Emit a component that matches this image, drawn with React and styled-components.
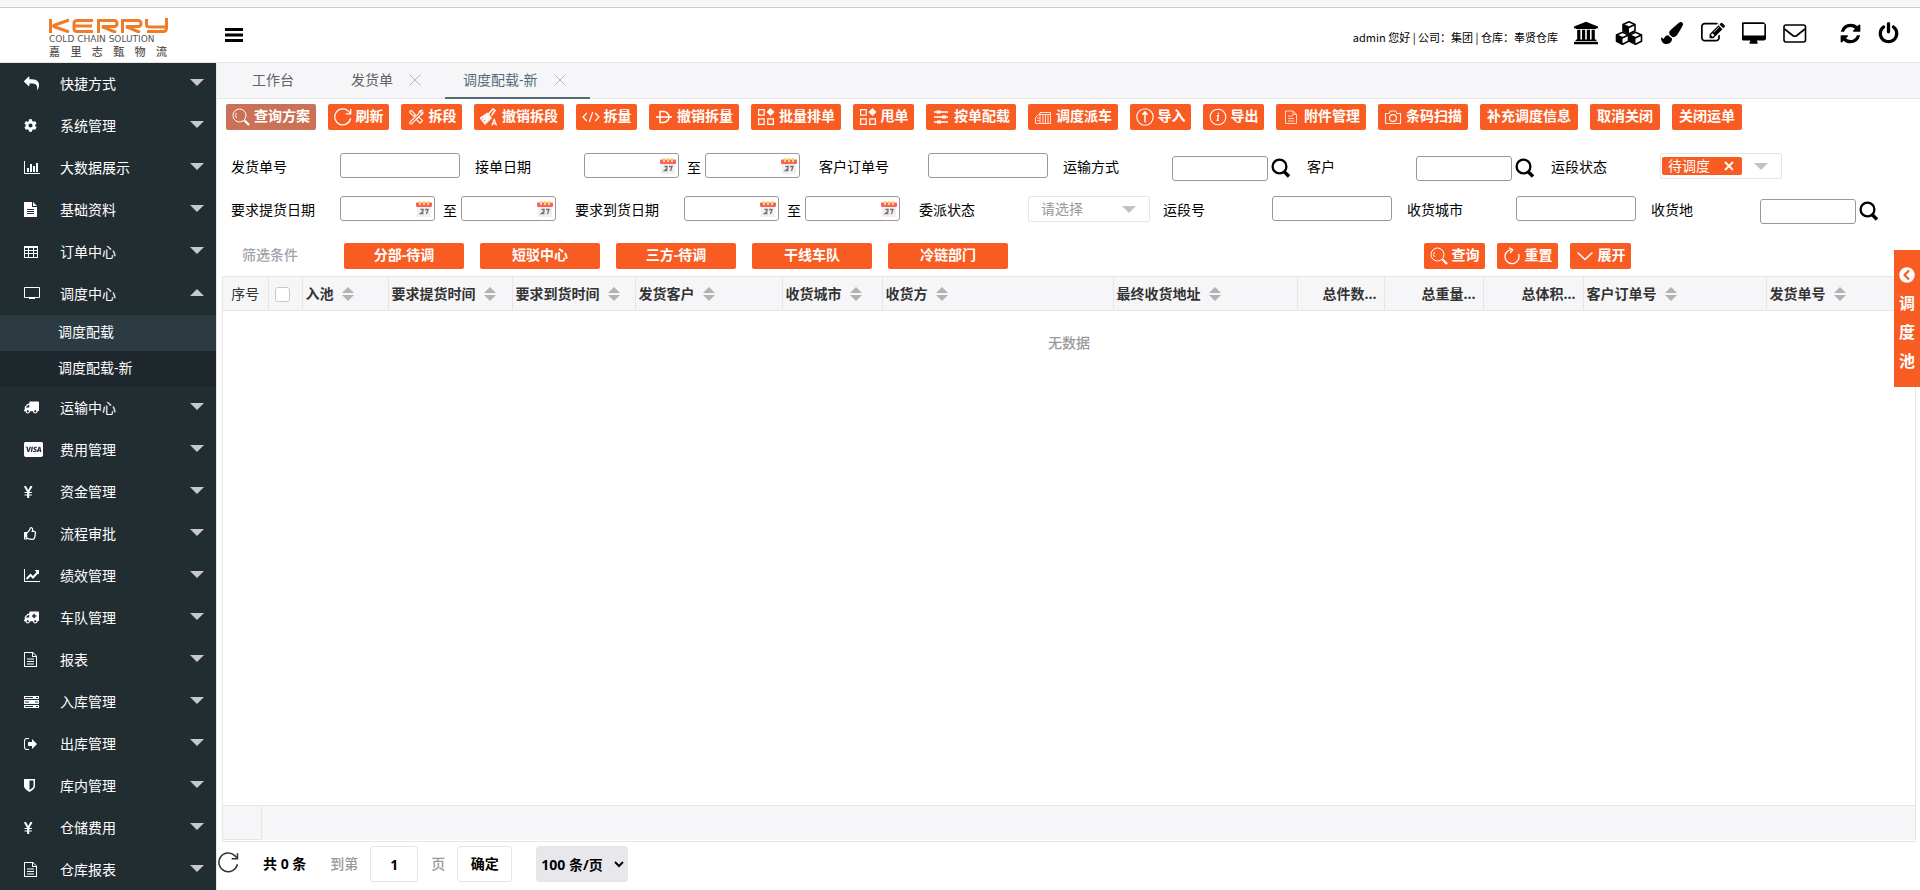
import React from "react";
import styled, { createGlobalStyle, css } from "styled-components";
import {
  FaCog, FaPaintBrush, FaTruck, FaAmbulance, FaCcVisa,
  FaRegThumbsUp, FaChevronCircleLeft,
} from "react-icons/fa";

const ORANGE = "#f85c22";
const LINE = "#e6e6e6";
const PANEL = "#f6f6f8";

const Global = createGlobalStyle`
  * { box-sizing: border-box; }
  html, body, #root { height: 100%; }
  body {
    margin: 0;
    background: #fff;
    color: #000;
    overflow: hidden;
    font: 14px/20px "Open Sans", "Noto Sans CJK SC", sans-serif;
  }
  button, input, select { font: inherit; color: inherit; }
  button { cursor: pointer; }
  svg { display: block; flex: none; }
`;

/* ---------- icons ---------- */

const Line = ({ size = 18, box = 18, w = 1, children }) => (
  <svg width={size} height={size} viewBox={`0 0 ${box} ${box}`} fill="none" stroke="currentColor" strokeWidth={w} aria-hidden="true">
    {children}
  </svg>
);
const Solid = ({ width = 16, height = 16, box = "0 0 1792 1792", flip, children }) => (
  <svg width={width} height={height} viewBox={box} fill="currentColor" aria-hidden="true">
    <g transform={flip ? "translate(1792 0) scale(-1 1)" : undefined}>{children}</g>
  </svg>
);

const SearchLine = () => (
  <Line><circle cx="7.5" cy="7.5" r="6.5" /><path d="M4.5 10a4 4 0 0 1 0-5" /><path d="M12.5 12.5l4.500 4.500" strokeWidth="2.400" /></Line>
);
const RefreshLine = ({ size = 18 }) => (
  <Line size={size} w={1.3}><path d="M16.6 10.500A8 8 0 1 1 14.300 3.100L16.500 5.200" /><path d="M16.700 1v4.800h-5" /></Line>
);
const ResetLine = () => (
  <Line w={1.3}><path d="M9 2.600A7 7 0 1 0 15.500 7" /><path d="M6 .8l3.700 2-2.500 3.400" /></Line>
);
const ToolsLine = () => (
  <Line w={1.100}><path d="M3 14.200l9-9M4.600 15.800l9-9M3 14.200q-.6 2 1.600 1.600" /><path d="M12 5.200q-.2-3 3-3l-1.500 2 .8.900 1.700-1q0 3-2.800 2.600" /><path d="M2.800 3.200l1.700-.7L8.500 7 7 8.300 3 4.700zM10 10.500l2-1.500 3.500 3.800-2.400 2.400-3.400-3.400z" /></Line>
);
const BrushA = () => (
  <Line><path d="M0 10l7.500-5 4 5-6.500 6.500z" fill="currentColor" /><path d="M8.500 6l4.500-5 2 1.500-3.500 5" strokeWidth="1.500" /><path d="M1.800 11.300l1.700-1M3.500 13.300l2-1.500" stroke={ORANGE} strokeWidth=".8" /><path d="M12 17.500l2.200-6 2.300 6M12.700 15.600h3" strokeWidth="1.200" /></Line>
);
const CodeLine = () => (
  <Line w={1.200}><path d="M4.800 5L1 9l3.800 4M13.200 5L17 9l-3.800 4M10.700 4L7.300 14" /></Line>
);
const StrikeD = () => (
  <Line w={1.5}><path d="M5 3.500h3.500a5.500 5.500 0 0 1 0 11H5zM1 9h16" /></Line>
);
const Blocks = () => (
  <Line w={1.2}><path d="M1.600 1.600h5.600v5.600H1.600zM1.600 10.800h5.600v5.600H1.600zM10.800 10.800h5.600v5.600h-5.600z" /><path d="M13.500 0l4 4-4 4-4-4z" fill="currentColor" stroke="none" /></Line>
);
const Sliders = () => (
  <Line w={1.400}><path d="M2 4h14M2 9h14M2 14h14" /><path d="M6.500 2.500v3M12 7.500v3M7 12.500v3" strokeWidth="4" /></Line>
);
const Dispatch = () => (
  <Line w={1}><path d="M1.500 15.500v-6l3-3h12v9zM6 15V4.500h10.500V7M9 7v8M11.500 7v8M14 7v8M3 10h2.500M3 12.500h2.500" opacity=".8" /></Line>
);
const ImportLine = () => (
  <Line w={1.100}><circle cx="9" cy="9" r="8.200" /><path d="M9 14.500V4M6.500 6.800L9 4l2.500 2.800" strokeWidth="1.500" /></Line>
);
const InfoLine = () => (
  <Line w={1.100}><circle cx="9" cy="9" r="7.800" /><path d="M7.800 7.800h1.600l-1 4.400h1.500M9.400 4.800v1.400" strokeWidth="1.400" /></Line>
);
const DocLine = () => (
  <Line w={1}><path d="M3.500 3h7.500l3.500 3.500V15.500h-11zM11 3v3.500h3.500M6 8h5M6 10.500h6M6 13h6" opacity=".75" /></Line>
);
const CameraLine = () => (
  <Line w={1.100}><path d="M1.500 5.500H5L6.500 3h5L13 5.500h3.500v10h-15z" opacity=".85" /><circle cx="9" cy="10" r="3.400" /></Line>
);
const DownLine = () => <Line w={1.500}><path d="M1.500 5.500L9 12.500l7.500-7" /></Line>;
const CloseLine = () => <Line size={12} box={12} w={1}><path d="M.5.5l11 11M11.500.5l-11 11" /></Line>;
const Lens = () => (
  <Line size={20} box={20}><circle cx="8.500" cy="8.500" r="6.900" strokeWidth="2.300" /><path d="M13 13.500l5 5" strokeWidth="3.400" /></Line>
);
const Calendar = () => (
  <svg width="18" height="18" viewBox="0 0 18 18" aria-hidden="true">
    <path d="M2 5h14v12H2z" fill="#f1efef" />
    <path d="M1 3.500q0-1 1-1h14q1 0 1 1V6q0 1-1 1H2Q1 7 1 6z" fill="#f9625f" />
    <path d="M4 1h2v4H4zM8 1h2v4H8zM12 1h2v4h-2z" fill="#f9d96a" />
    <path d="M5.500 9.500h2.500v2L5.500 13.500h3M10 9.500h3l-1.500 4.500" fill="none" stroke="#776b6e" strokeWidth="1.300" />
  </svg>
);

const Bars = () => <Solid width={18} height={16} box="0 0 18 16"><path d="M0 1h18v3H0zM0 6.500h18v3H0zM0 12h18v3H0z" /></Solid>;
const Bank = () => (
  <Solid width={24} height={24} box="0 0 1920 1792">
    <path d="M960 0l960 384v128h-128q0 26-20 45t-49 19H197q-28 0-48-19t-21-45H0V384zM256 640h256v768h128V640h256v768h128V640h256v768h128V640h256v768h59q28 0 49 19t20 45v64H128v-64q0-26 21-45t48-19h59zM1851 1600q28 0 49 19t20 45v128H0v-128q0-26 21-45t48-19z" />
  </Solid>
);
const Cube = ({ x, y }) => (
  <g transform={`translate(${x} ${y})`}>
    <path d="M7 .8l6 2.600v6.400L7 12.800 1 9.800V3.400z" fill="#fff" stroke="currentColor" strokeWidth="1.600" strokeLinejoin="round" />
    <path d="M1 3.600l6 2.700v6.500L1 9.800z" fill="currentColor" />
    <path d="M1 3.500l6 2.800 6-2.800" fill="none" stroke="currentColor" strokeWidth="1.500" />
  </g>
);
const Cubes = () => (
  <svg width="28" height="24" viewBox="0 0 28 24" aria-hidden="true">
    <Cube x={7} y={0} /><Cube x={0.500} y={10.500} /><Cube x={13.500} y={10.500} />
  </svg>
);
const Power = () => (
  <Solid width={23} height={23}>
    <path d="M1664 896q0 156-61 298t-164 245-245 164-298 61-298-61-245-164-164-245-61-298q0-182 80.500-343t226.500-270q43-32 95.500-25t83.500 50q32 42 24.500 94.500t-49.500 84.500q-98 74-151.500 181t-53.500 228q0 104 40.500 198.500t109.500 163.500 163.500 109.500 198.500 40.500 198.500-40.500 163.500-109.500 109.500-163.500 40.500-198.500q0-121-53.500-228t-151.500-181q-42-32-49.500-84.500t24.500-94.500q31-43 84-50t95 25q146 109 226.500 270t80.500 343zm-640-768v640q0 52-38 90t-90 38-90-38-38-90v-640q0-52 38-90t90-38 90 38 38 90z" />
  </Solid>
);
const Refresh = () => (
  <Solid width={23} height={23}>
    <path d="M1639 1056q0 5-1 7-64 268-268 434.500t-478 166.500q-146 0-282.500-55t-243.500-157l-129 129q-19 19-45 19t-45-19-19-45v-448q0-26 19-45t45-19h448q26 0 45 19t19 45-19 45l-137 137q71 66 161 102t187 36q134 0 250-65t186-179q11-17 53-117 8-23 30-23h192q13 0 22.500 9.500t9.500 22.500zm25-800v448q0 26-19 45t-45 19h-448q-26 0-45-19t-19-45 19-45l138-138q-148-137-349-137-134 0-250 65t-186 179q-11 17-53 117-8 23-30 23h-199q-13 0-22.500-9.500t-9.500-22.500v-7q65-268 270-434.500t480-166.500q146 0 284 55.500t245 156.500l130-129q19-19 45-19t45 19 19 45z" />
  </Solid>
);
const Desktop = () => (
  <Solid width={24} height={22} box="0 0 1856 1664">
    <path d="M1728 992v-832q0-13-9.500-22.500t-22.500-9.500h-1536q-13 0-22.500 9.500t-9.500 22.500v832q0 13 9.500 22.500t22.500 9.500h1536q13 0 22.500-9.500t9.500-22.500zm128-832v1088q0 66-47 113t-113 47h-544q0 37 16 77.500t32 71 16 43.500q0 26-19 45t-45 19h-512q-26 0-45-19t-19-45q0-14 16-44t32-70 16-78h-544q-66 0-113-47t-47-113v-1088q0-66 47-113t113-47h1536q66 0 113 47t47 113z" />
  </Solid>
);
const Edit = () => (
  <Solid width={24} height={24}>
    <path d="M888 1184l116-116-152-152-116 116v56h96v96h56zm440-720q-16-16-33 1l-350 350q-17 17-1 33t33-1l350-350q17-17 1-33zm80 594v190q0 119-84.500 203.500t-203.500 84.500h-832q-119 0-203.500-84.500t-84.500-203.500v-832q0-119 84.500-203.500t203.500-84.500h832q63 0 117 25 15 7 18 23 3 17-9 29l-49 49q-14 14-32 8-23-6-45-6h-832q-66 0-113 47t-47 113v832q0 66 47 113t113 47h832q66 0 113-47t47-113v-126q0-13 9-22l64-64q15-15 35-7t20 29zm-96-738l288 288-672 672h-288v-288zm444 132l-92 92-288-288 92-92q28-28 68-28t68 28l152 152q28 28 28 68t-28 68z" />
  </Solid>
);
const Mail = () => (
  <Line size={24} box={24} w={1.600}>
    <rect x="1" y="4" width="21.500" height="17" rx="2" /><path d="M1.500 8l8.300 6.500q2 1.500 4 0L22 8" />
  </Line>
);
const Reply = () => (
  <Solid width={15} height={15} flip>
    <path d="M1792 640q0 26-19 45l-512 512q-19 19-45 19t-45-19-19-45v-256h-224q-98 0-175.500 6t-154 21.500-133 42.500-105.500 69.500-80 101-48.500 138.500-17.500 181q0 55 5 123 0 6 2.500 23.500t2.500 26.500q0 15-8.500 25t-23.500 10q-16 0-28-17-7-9-13-22t-13.500-30-10.500-24q-127-285-127-451 0-199 53-333 162-403 875-403h224v-256q0-26 19-45t45-19 45 19l512 512q19 19 19 45z" />
  </Solid>
);
const Screen = () => <Solid width={16} height={13} box="0 0 16 13"><path fillRule="evenodd" d="M1 0h14q1 0 1 1v9q0 1-1 1h-4v1H5v-1H1q-1 0-1-1V1Q0 0 1 0zM1 1v9h14V1z" /></Solid>;
const Yen = () => (
  <Line size={12} box={12} w={1.200}>
    <path d="M.8 0l3.400 6v6M7.600 0L4.200 6" strokeWidth="2" /><path d="M.5 6.500h7.400M.5 9h7.400" />
  </Line>
);
const BarChart = () => <Solid width={16} height={13} box="0 0 16 13"><path d="M0 0h1v12h15v1H0zM3 7h2v4H3zM6 3h2v8H6zM9 5h2v6H9zM12 2h2v9h-2z" /></Solid>;
const LineChart = () => (
  <svg width="16" height="13" viewBox="0 0 16 13" aria-hidden="true">
    <path d="M0 0h1v12h15v1H0zM10.500 1H15v4.500l-1.500-1.500z" fill="currentColor" />
    <path d="M2.500 10l4-4 2.500 2.500 5-5.500" fill="none" stroke="currentColor" strokeWidth="2" />
  </svg>
);
const FileSolid = () => <Solid width={13} height={15} box="0 0 13 15"><path fillRule="evenodd" d="M0 0h8v5h5v10H0zM9 0l4 4H9zM3 7v1h7V7zM3 9v1h7V9zM3 11v1h7v-1z" /></Solid>;
const FileOpen = () => <Solid width={13} height={15} box="0 0 13 15"><path fillRule="evenodd" d="M0 0h9l4 4v11H0zM1 1v13h11V5H8V1zM9 1v3h3zM3 6.500v1h7v-1zM3 9v1h7V9zM3 11.500v1h7v-1z" /></Solid>;
const Grid = () => <Solid width={14} height={12} box="0 0 14 12"><path fillRule="evenodd" d="M0 0h14v12H0zM1 2v2h3V2zM5 2v2h4V2zM10 2v2h3V2zM1 5v2h3V5zM5 5v2h4V5zM10 5v2h3V5zM1 8v3h3V8zM5 8v3h4V8zM10 8v3h3V8z" /></Solid>;
const Server = () => <Solid width={15} height={12} box="0 0 15 12"><path fillRule="evenodd" d="M0 0h15v3H0zM0 4h15v4H0zM0 9h15v3H0zM1 1v1h8V1zM12 1v1h2V1zM1 5.500v1h4v-1zM11 5.500v1h3v-1zM1 10v1h8v-1zM12 10v1h2v-1z" /></Solid>;
const SignOut = () => <Solid width={13} height={12} box="0 0 13 12"><path d="M5 0v1H3Q1 1 1 3v6q0 2 2 2h2v1H3Q0 12 0 9V3Q0 0 3 0zM4 4h4V1l5 5-5 5V8H4z" /></Solid>;
const Shield = () => <Solid width={11} height={13} box="0 0 11 13"><path fillRule="evenodd" d="M0 0h11v7q0 3-5.500 6Q0 10 0 7zM5.500 1.500v9.500Q9.500 8.500 9.500 7V1.500z" /></Solid>;

/* ---------- frame ---------- */

const Page = styled.div`
  display: flex;
  flex-direction: column;
  height: 100%;
`;
const TopStrip = styled.div`
  flex: none;
  height: 8px;
  background: ${PANEL};
  border-bottom: 1px solid #ccc;
`;
const Header = styled.header`
  flex: none;
  display: flex;
  align-items: center;
  height: 55px;
  border-bottom: 1px solid ${LINE};
`;
const Brand = styled.div`
  flex: none;
  align-self: flex-start;
  width: 217px;
  padding: 10px 50px 0 49px;
  color: #555;
  white-space: nowrap;
`;
const BrandEnglish = styled.div`
  font: 9px/13px "DejaVu Sans", sans-serif;
`;
const BrandChinese = styled.div`
  font: 500 11px/10px "Noto Sans CJK SC", sans-serif;
  text-align-last: justify;
`;
const MenuButton = styled.button`
  margin-left: 8px;
  padding: 0;
  border: 0;
  background: none;
`;
const Account = styled.p`
  margin: 4px 16px 0 auto;
  font: 11px/20px "Noto Sans CJK SC", sans-serif;
`;
const HeaderTools = styled.nav`
  display: flex;
  align-items: center;
  padding: 0 20px 4px 0;
  gap: 17px;
`;
const ToolButton = styled.button`
  display: grid;
  place-items: center;
  min-width: 24px;
  height: 28px;
  padding: 0;
  border: 0;
  background: none;
  margin-left: ${(p) => (p.$apart ? "14px" : 0)};
  margin-right: ${(p) => (p.$apart ? "-3px" : 0)};
`;
const Body = styled.div`
  flex: 1;
  min-height: 0;
  display: flex;
`;

/* ---------- side menu ---------- */

const Sidebar = styled.nav`
  flex: none;
  width: 216px;
  overflow: hidden;
  background: #222d32;
  color: #fff;
`;
const MenuItem = styled.button`
  display: flex;
  align-items: center;
  width: 100%;
  height: 42px;
  padding: 0 12px 1px 24px;
  border: 0;
  background: none;
  text-align: left;
`;
const MenuIcon = styled.span`
  flex: none;
  width: 36px;
`;
const Caret = styled.i`
  flex: none;
  margin: 0 0 3px auto;
  border: 7px solid transparent;
  border-bottom-width: 0;
  border-top-color: ${(p) => p.$color || "#c8c8c8"};
  transform: ${(p) => (p.$up ? "rotate(180deg)" : "none")};
`;
const SubItem = styled.a`
  display: block;
  padding: 7px 0 9px 58px;
  background: ${(p) => (p.$on ? "#2c3b41" : "#1e282c")};
  color: #fff;
  text-decoration: none;
`;

/* ---------- tabs and toolbar ---------- */

const Main = styled.main`
  flex: 1;
  min-width: 0;
  display: flex;
  flex-direction: column;
  border-left: 1px solid ${LINE};
`;
const Tabs = styled.div`
  flex: none;
  display: flex;
  height: 36px;
  padding-left: 17px;
  background: ${PANEL};
  border-bottom: 1px solid ${LINE};
`;
const Tab = styled.div`
  display: flex;
  align-items: center;
  height: 36px;
  padding: 0 ${(p) => (p.$plain ? "39px" : "24px")} 0 18px;
  gap: 16px;
  color: ${(p) => (p.$on ? "#56697a" : "#606266")};
  border-bottom: 2px solid ${(p) => (p.$on ? "#56697a" : "transparent")};
`;
const TabClose = styled.button`
  padding: 0;
  border: 0;
  background: none;
  color: #bbb;
`;
const Toolbar = styled.div`
  flex: none;
  display: flex;
  padding: 5px 0 0 9px;
  gap: 12px;
`;
const widths = { plain: "0", short: "61px", long: "90px", wide: "120px" };
const Action = styled.button`
  flex: none;
  display: flex;
  align-items: center;
  justify-content: center;
  gap: 4px;
  height: 26px;
  min-width: ${(p) => widths[p.$size]};
  padding: 0 ${(p) => (p.$size === "plain" ? "7px" : "5px")} 3px;
  border: 0;
  border-radius: 2px;
  background: ${(p) => (p.$hot ? "#cb7158" : ORANGE)};
  color: #fff;
  font-weight: 700;
  line-height: 20px;
  white-space: nowrap;
  svg { margin: 2px 0 0; width: 18px; height: 18px; }
`;

/* ---------- filters ---------- */

const Filters = styled.form`
  flex: none;
  padding: 23px 0 0 14px;
`;
const FieldRow = styled.div`
  display: flex;
  height: 43px;
`;
const Field = styled.div`
  flex: none;
  display: flex;
  align-items: flex-start;
  width: ${(p) => (p.$range ? "344px" : "244px")};
`;
const Label = styled.label`
  flex: none;
  width: 109px;
  padding-top: 4px;
`;
const Box = styled.input`
  width: ${(p) => p.$w || 120}px;
  height: 25px;
  margin: ${(p) => (p.$low ? "3px 3px 0 0" : 0)};
  padding: 0 4px;
  border: 1px solid #999;
  border-radius: 3px;
  background: #fff;
`;
const DateWrap = styled.span`
  display: grid;
  grid-template-columns: 95px;
  align-items: center;
  justify-items: end;
  > * { grid-area: 1 / 1; }
  svg { margin-right: 2px; pointer-events: none; }
`;
const To = styled.span`
  padding: 5px 4px 0 8px;
`;
const LensButton = styled.button`
  margin-top: 5px;
  padding: 0;
  border: 0;
  background: none;
`;
const Picker = styled.div`
  display: flex;
  align-items: center;
  width: 122px;
  height: 26px;
  padding: 0 13px 0 ${(p) => (p.$tagged ? "1px" : "12px")};
  border: 1px solid ${LINE};
  border-radius: 2px;
  color: #999;
  ${Caret} { margin-bottom: 0; }
`;
const BareSelect = styled.select`
  flex: 1;
  min-width: 0;
  padding: 0;
  border: 0;
  background: none;
  appearance: none;
  color: #999;
`;
const Tag = styled.span`
  display: flex;
  align-items: center;
  justify-content: space-between;
  width: 80px;
  height: 18px;
  padding: 0 8px 0 6px;
  border-radius: 2px;
  background: ${ORANGE};
  color: #fff;
`;
const TagClose = styled.button`
  padding: 0;
  border: 0;
  background: none;
`;
const QuickRow = styled.div`
  display: flex;
  align-items: center;
  padding: 4px 0 7px 11px;
`;
const QuickTitle = styled.span`
  width: 102px;
  padding-bottom: 2px;
  color: #9fa3ab;
  font-weight: 500;
`;
const QuickGroup = styled.div`
  display: flex;
  gap: ${(p) => p.$gap}px;
`;
const QuickSpace = styled.div`
  width: 416px;
`;

/* ---------- table ---------- */

const TableFrame = styled.section`
  flex: 1;
  min-height: 0;
  display: flex;
  flex-direction: column;
  margin: 0 4px 0 5px;
  border: 1px solid ${LINE};
`;
const Table = styled.table`
  width: 100%;
  table-layout: fixed;
  border-collapse: collapse;
`;
const Th = styled.th`
  height: 33px;
  padding: 1px ${(p) => (p.$right ? "7px" : "3px")} 0;
  background: ${PANEL};
  border-right: 1px solid ${LINE};
  border-bottom: 1px solid ${LINE};
  color: #333;
  font-weight: ${(p) => (p.$light ? 400 : 700)};
  text-align: ${(p) => (p.$right ? "right" : p.$light ? "center" : "left")};
  white-space: nowrap;
  &:last-child { border-right: 0; }
`;
const HeadCell = styled.span`
  display: flex;
  align-items: center;
  gap: 8px;
`;
const SortMark = styled.i`
  width: 12px;
  height: 14px;
  &::before, &::after {
    content: "";
    display: block;
    border: 6px solid transparent;
  }
  &::before { border-top-width: 0; border-bottom-color: #b2b2b2; margin-bottom: 2px; }
  &::after { border-bottom-width: 0; border-top-color: #b2b2b2; }
`;
const Check = styled.input`
  appearance: none;
  display: block;
  width: 15px;
  height: 15px;
  margin: 2px 0 0 3px;
  border: 1px solid #c8c8c8;
  border-radius: 3px;
  background: #fff;
`;
const Empty = styled.td`
  height: 66px;
  padding: 0;
  color: #999;
  font-weight: 500;
  text-align: center;
`;
const Totals = styled.div`
  flex: none;
  height: 35px;
  margin: auto 0 1px;
  background: ${PANEL};
  border-top: 1px solid ${LINE};
`;
const TotalsCell = styled.div`
  width: 39px;
  height: 34px;
  border-right: 1px solid ${LINE};
  border-bottom: 1px solid ${LINE};
`;

const Pager = styled.footer`
  flex: none;
  display: flex;
  align-items: center;
  height: 48px;
  padding: 0 0 4px 1px;
  font-weight: 700;
`;
const PagerIcon = styled.button`
  padding: 0;
  margin: 0 24px 4px 0;
  border: 0;
  background: none;
  color: #333;
`;
const Muted = styled.label`
  margin-left: ${(p) => p.$gap}px;
  color: #999;
  font-weight: 500;
`;
const pagerBox = css`
  height: 36px;
  border: 1px solid ${LINE};
  border-radius: 3px;
  background: #fff;
  font-weight: 700;
`;
const PageInput = styled.input`
  ${pagerBox}
  width: 48px;
  margin-left: 12px;
  text-align: center;
`;
const PageGo = styled.button`
  ${pagerBox}
  width: 55px;
  margin: 0 24px 0 12px;
  padding: 0;
`;
const PageSize = styled.select`
  ${pagerBox}
  width: 92px;
  background: #e8e7ec;
`;

const Drawer = styled.button`
  position: fixed;
  top: 250px;
  right: 0;
  display: flex;
  flex-direction: column;
  align-items: center;
  width: 26px;
  height: 137px;
  padding: 17px 0 0;
  border: 0;
  background: ${ORANGE};
  color: #fff;
  font-size: 16px;
  font-weight: 700;
  line-height: 29px;
`;
const DrawerText = styled.span`
  width: 16px;
  margin-top: 6px;
`;

/* ---------- data ---------- */

const menu = [
  ["快捷方式", <Reply />], ["系统管理", <FaCog size={13} />], ["大数据展示", <BarChart />],
  ["基础资料", <FileSolid />], ["订单中心", <Grid />],
  ["调度中心", <Screen />, ["调度配载", "调度配载-新"]],
  ["运输中心", <FaTruck size={15} transform="scale(-1 1)" />], ["费用管理", <FaCcVisa size={19} />],
  ["资金管理", <Yen />], ["流程审批", <FaRegThumbsUp size={13} />],
  ["绩效管理", <LineChart />], ["车队管理", <FaAmbulance size={15} transform="scale(-1 1)" />],
  ["报表", <FileOpen />], ["入库管理", <Server />], ["出库管理", <SignOut />],
  ["库内管理", <Shield />], ["仓储费用", <Yen />], ["仓库报表", <FileOpen />],
];
const headerTools = [
  ["机构", Bank], ["仓库", Cubes], ["主题", () => <FaPaintBrush size={22} />],
  ["编辑", Edit], ["桌面", Desktop], ["消息", Mail], ["刷新", Refresh], ["退出", Power],
];
const actions = [
  ["查询方案", SearchLine], ["刷新", RefreshLine], ["拆段", ToolsLine], ["撤销拆段", BrushA],
  ["拆量", CodeLine], ["撤销拆量", StrikeD], ["批量排单", Blocks], ["甩单", Blocks],
  ["按单配载", Sliders], ["调度派车", Dispatch], ["导入", ImportLine], ["导出", InfoLine],
  ["附件管理", DocLine], ["条码扫描", CameraLine], ["补充调度信息"], ["取消关闭"], ["关闭运单"],
];
const rows = [
  [["发货单号", "text"], ["接单日期", "range"], ["客户订单号", "text"], ["运输方式", "lookup"], ["客户", "lookup"], ["运段状态", "tag"]],
  [["要求提货日期", "range"], ["要求到货日期", "range"], ["委派状态", "select"], ["运段号", "text"], ["收货城市", "text"], ["收货地", "lookup"]],
];
const quick = ["分部-待调", "短驳中心", "三方-待调", "干线车队", "冷链部门"];
const columns = [
  ["入池", 86], ["要求提货时间", 124], ["要求到货时间", 123], ["发货客户", 147], ["收货城市", 100],
  ["收货方", 231], ["最终收货地址", 184], ["总件数...", 87, true], ["总重量...", 99, true],
  ["总体积...", 100, true], ["客户订单号", 183], ["发货单号", null],
];

/* ---------- parts ---------- */

const sizeOf = (name, Icon) => (!Icon ? "plain" : name.length > 2 ? "long" : "short");

const DateBox = ({ id, label }) => (
  <DateWrap><Box id={id} aria-label={label} $w={95} /><Calendar /></DateWrap>
);

function FilterField({ name, kind }) {
  const id = `f-${name}`;
  return (
    <Field $range={kind === "range"}>
      <Label htmlFor={kind === "tag" ? undefined : id}>{name}</Label>
      {kind === "text" && <Box id={id} />}
      {kind === "range" && (<><DateBox id={id} /><To>至</To><DateBox label={`${name}至`} /></>)}
      {kind === "lookup" && (<><Box id={id} $w={96} $low /><LensButton type="button" aria-label={`查找${name}`}><Lens /></LensButton></>)}
      {kind === "select" && (<Picker><BareSelect id={id}><option>请选择</option></BareSelect><Caret $color="#c2c2c2" /></Picker>)}
      {kind === "tag" && (
        <Picker $tagged role="group" aria-label={name}>
          <Tag>待调度<TagClose type="button" aria-label="移除"><Line size={10} box={10} w={1.800}><path d="M1 1l8 8M9 1L1 9" /></Line></TagClose></Tag>
          <Caret $color="#c2c2c2" />
        </Picker>
      )}
    </Field>
  );
}

const Wordmark = () => (
  <svg width="119" height="15" viewBox="0 0 119 15" role="img" aria-label="KERRY">
    <g fill="none" stroke="#f07c28" strokeWidth="3">
      <path d="M1.500 1v14M20 2L6 7q-3 1 0 2L20 14" />
      <path d="M44 2.500H28q-3 0-3 3v5q0 3 3 3h16M26 8h17" />
      <path d="M49.500 15V2.500H65q3 0 3 3t-3 3H53l14 6" />
      <path d="M73.500 15V2.500H89q3 0 3 3t-3 3H77l14 6" />
      <path d="M97.500 1v5q0 3 3 3H117M117.500 0v10q0 3.500-3 3.500H98" />
    </g>
  </svg>
);

export default function App() {
  return (
    <Page>
      <Global />
      <TopStrip />
      <Header>
        <Brand>
          <Wordmark />
          <BrandEnglish>COLD CHAIN SOLUTION</BrandEnglish>
          <BrandChinese>嘉 里 志 甄 物 流</BrandChinese>
        </Brand>
        <MenuButton aria-label="菜单"><Bars /></MenuButton>
        <Account>admin 您好 | 公司：集团 | 仓库：奉贤仓库</Account>
        <HeaderTools>
          {headerTools.map(([name, Icon]) => (
            <ToolButton key={name} aria-label={name} $apart={name === "刷新"}><Icon /></ToolButton>
          ))}
        </HeaderTools>
      </Header>
      <Body>
        <Sidebar>
          {menu.map(([name, icon, children]) => (
            <React.Fragment key={name}>
              <MenuItem><MenuIcon>{icon}</MenuIcon>{name}<Caret $up={!!children} /></MenuItem>
              {children && children.map((c, i) => <SubItem key={c} href="#" $on={i === 0}>{c}</SubItem>)}
            </React.Fragment>
          ))}
        </Sidebar>
        <Main>
          <Tabs>
            <Tab $plain>工作台</Tab>
            <Tab>发货单<TabClose aria-label="关闭发货单"><CloseLine /></TabClose></Tab>
            <Tab $on>调度配载-新<TabClose aria-label="关闭调度配载-新"><CloseLine /></TabClose></Tab>
          </Tabs>
          <Toolbar>
            {actions.map(([name, Icon], i) => (
              <Action key={name} $hot={i === 0} $size={sizeOf(name, Icon)}>{Icon && <Icon />}{name}</Action>
            ))}
          </Toolbar>
          <Filters>
            {rows.map((row, i) => (
              <FieldRow key={i}>{row.map(([name, kind]) => <FilterField key={name} name={name} kind={kind} />)}</FieldRow>
            ))}
            <QuickRow>
              <QuickTitle>筛选条件</QuickTitle>
              <QuickGroup $gap={16}>{quick.map((q) => <Action key={q} type="button" $size="wide">{q}</Action>)}</QuickGroup>
              <QuickSpace />
              <QuickGroup $gap={12}>
                <Action type="button" $size="short"><SearchLine />查询</Action>
                <Action type="button" $size="short"><ResetLine />重置</Action>
                <Action type="button" $size="short"><DownLine />展开</Action>
              </QuickGroup>
            </QuickRow>
          </Filters>
          <TableFrame>
            <Table>
              <colgroup>
                <col width="45" /><col width="34" />
                {columns.map(([name, w]) => <col key={name} width={w || undefined} />)}
              </colgroup>
              <thead>
                <tr>
                  <Th $light>序号</Th>
                  <Th><Check type="checkbox" aria-label="全选" /></Th>
                  {columns.map(([name, , right]) => (
                    <Th key={name} $right={right}>{right ? name : <HeadCell>{name}<SortMark /></HeadCell>}</Th>
                  ))}
                </tr>
              </thead>
              <tbody><tr><Empty colSpan={14}>无数据</Empty></tr></tbody>
            </Table>
            <Totals><TotalsCell /></Totals>
          </TableFrame>
          <Pager>
            <PagerIcon aria-label="刷新列表"><RefreshLine size={21} /></PagerIcon>
            <span>共 0 条</span>
            <Muted $gap={24} htmlFor="page">到第</Muted>
            <PageInput id="page" defaultValue="1" />
            <Muted as="span" $gap={13}>页</Muted>
            <PageGo>确定</PageGo>
            <PageSize aria-label="每页条数"><option>100 条/页</option></PageSize>
          </Pager>
        </Main>
      </Body>
      <Drawer><FaChevronCircleLeft size={16} /><DrawerText>调度池</DrawerText></Drawer>
    </Page>
  );
}
